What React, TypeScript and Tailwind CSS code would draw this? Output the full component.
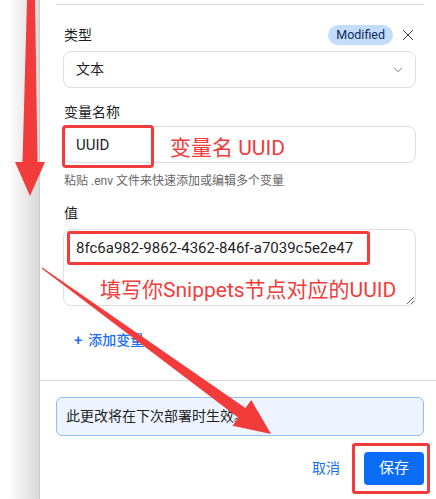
import { X, ChevronDown } from 'lucide-react';

const red = '#f23b3b';

export default function App() {
  return (
    <div className="relative w-[436px] h-[499px] overflow-hidden bg-white flex font-[Roboto,'Noto_Sans_CJK_SC',sans-serif] text-[#1f1f1f]">
      {/* shadow strip left of the drawer */}
      <div className="w-[40px] shrink-0 bg-gradient-to-r from-white from-20% to-[#d9d9d9] border-r border-[#cbcbcb]" />

      <div className="flex-1 flex flex-col">
        <div className="ml-[16px] mr-[12px] h-[5px] border-b border-[#dcdcdc]" />

        {/* form */}
        <div className="pl-[23px] pr-[20px]">
          <div className="mt-[20px] h-[20px] flex items-center justify-between">
            <span className="text-[14px] leading-[20px] ml-[1px]">类型</span>
            <div className="flex items-center gap-[6px]">
              <span className="h-[20px] px-[8px] rounded-full bg-[#c3dcfb] text-[#0e2b5c] text-[12.5px] leading-[20px]">
                Modified
              </span>
              <X size={18} strokeWidth={1.3} className="text-[#333] mr-[-1px]" />
            </div>
          </div>

          <div className="mt-[6px] h-[37px] rounded-[8px] border border-[#dedede] px-[12px] flex items-center justify-between">
            <span className="text-[14px]">文本</span>
            <ChevronDown size={14} strokeWidth={1.5} className="text-[#666] mr-[-2px]" />
          </div>

          <div className="mt-[14px] text-[14px] leading-[20px] ml-[1px]">变量名称</div>
          <input
            readOnly
            value="UUID"
            className="mt-[4px] w-full h-[37px] rounded-[8px] border border-[#dedede] px-[12px] text-[15px] outline-none"
          />
          <div className="mt-[10px] text-[12px] leading-[16px] text-[#666] ml-[1px]">
            粘贴 .env 文件来快速添加或编辑多个变量
          </div>

          <div className="mt-[14px] text-[14px] leading-[20px] ml-[1px]">值</div>
          <textarea
            readOnly
            value="8fc6a982-9862-4362-846f-a7039c5e2e47"
            className="mt-[6px] block w-full h-[77px] rounded-[8px] border border-[#dedede] px-[12px] pt-[8px] text-[15px] leading-[20px] outline-none"
          />

          <div className="mt-[24px] pl-[11px] h-[20px] flex items-center gap-[6px] text-[#1a6ef5] text-[14px] font-medium">
            <span className="text-[15px]">+</span>
            <span>添加变量</span>
          </div>
        </div>

        {/* footer */}
        <div className="mt-[30px] border-t border-[#d9d9d9]">
          <div className="ml-[16px] mr-[12px] mt-[16px] h-[39px] rounded-[6px] border border-[#93bdf6] bg-[#edf4ff] px-[9px] flex items-center text-[14px]">
            此更改将在下次部署时生效。
          </div>
          <div className="mr-[12px] mt-[16px] flex items-center justify-end gap-[24px]">
            <span className="text-[14px] text-[#1a6ef5]">取消</span>
            <button className="w-[60px] h-[33px] rounded-[4px] bg-[#0b6cf6] text-white text-[15px]">
              保存
            </button>
          </div>
        </div>
      </div>

      {/* annotations */}
      <div className="absolute left-[62px] top-[125px] w-[92px] h-[43px] border-[3px] border-[#f23b3b] rounded-[4px]" />
      <div className="absolute left-[170px] top-[135px] text-[21px] leading-[26px] text-[#f23b3b]">变量名 UUID</div>
      <div className="absolute left-[67px] top-[231px] w-[303px] h-[34px] border-[3px] border-[#f23b3b] rounded-[3px]" />
      <div className="absolute left-[100px] top-[277px] text-[21px] leading-[26px] text-[#f23b3b]">
        填写你Snippets节点对应的UUID
      </div>
      <div className="absolute left-[352px] top-[443px] w-[78px] h-[51px] border-[3px] border-[#f23b3b] rounded-[3px]" />

      <svg className="absolute left-0 top-0 pointer-events-none" width="436" height="499" viewBox="0 0 436 499">
        <polygon fill={red} points="27,0 35,0 37.5,162 45,162 30,196 15,162 22.5,162" />
        <polygon
          fill={red}
          points="42.3,267.6 245.4,408 251.3,400 271,434 232.5,425.8 238.4,417.8 41.7,268.4"
        />
      </svg>
    </div>
  );
}
